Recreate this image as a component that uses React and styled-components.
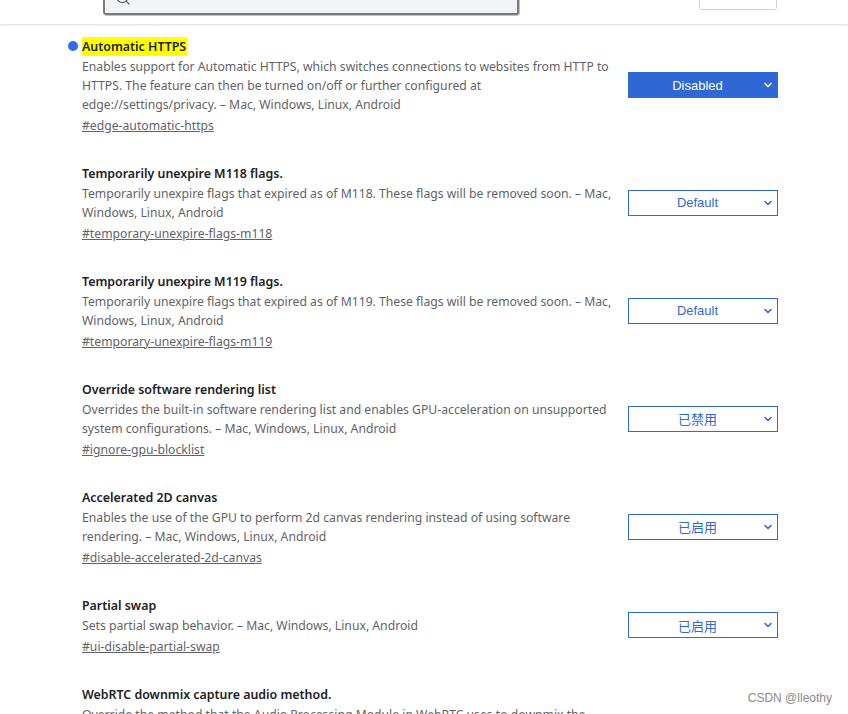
import React from 'react';
import styled, { createGlobalStyle } from 'styled-components';
import { ChevronDown, Search } from 'lucide-react';

const GlobalStyle = createGlobalStyle`
  html, body {
    margin: 0;
    padding: 0;
    background: #ffffff;
    height: 714px;
    overflow: hidden;
  }
  body {
    font-family: "Noto Sans", "Noto Sans CJK SC", sans-serif;
  }
`;

const Page = styled.div`
  position: relative;
  height: 714px;
  overflow: hidden;
`;

const Header = styled.header`
  height: 24px;
  display: flex;
  align-items: flex-end;
  border-bottom: 1px solid #e6e6e6;
  box-shadow: 0 1px 2px rgba(0, 0, 0, 0.06);
  overflow: hidden;
  padding: 0 71px 0 103px;
`;

const SearchBox = styled.div`
  width: 416px;
  height: 40px;
  box-sizing: border-box;
  margin-bottom: 9px;
  background: #f1f3f4;
  border: 2px solid #7b7b7b;
  border-radius: 3px;
  box-shadow: 1px 1px 0 #a9c4f5;
  display: flex;
  align-items: flex-end;
  padding: 0 0 7px 10px;
  color: #5f6368;
`;

const ResetButton = styled.div`
  margin-left: auto;
  width: 78px;
  height: 36px;
  box-sizing: border-box;
  margin-bottom: 14px;
  border: 1px solid #d2d2d2;
  border-radius: 3px;
  background: #fff;
`;

const List = styled.main`
  padding: 10px 0 0 82px;
`;

const Item = styled.section`
  display: flex;
  align-items: center;
  margin-bottom: 27px;
`;

const Info = styled.div`
  width: 532px;
`;

const Title = styled.div`
  display: flex;
  align-items: center;
  height: 22px;
  font-size: 12.4px;
  font-weight: 600;
  color: #202124;
`;

const Dot = styled.span`
  width: 10px;
  height: 10px;
  border-radius: 50%;
  background: #2f6fe4;
  margin-left: -14px;
  margin-right: 4px;
`;

const TitleText = styled.span`
  background: ${p => (p.$hit ? '#ffff00' : 'transparent')};
  line-height: 19px;
  padding-right: 1px;
`;

const Desc = styled.div`
  font-size: 12.2px;
  line-height: 19px;
  color: #5f6368;
`;

const Anchor = styled.a`
  display: block;
  margin-top: 2px;
  font-size: 12.2px;
  line-height: 19px;
  color: #5f6368;
  text-decoration: underline;
`;

const Select = styled.div`
  margin-left: 14px;
  width: 150px;
  height: 26px;
  box-sizing: border-box;
  border: 1px solid #3069d6;
  background: ${p => (p.$active ? '#2f67d4' : '#ffffff')};
  color: ${p => (p.$active ? '#ffffff' : '#3069d6')};
  display: flex;
  align-items: center;
  font-family: "Liberation Sans", "Noto Sans CJK SC", sans-serif;
  font-size: 13px;
`;

const SelectLabel = styled.span`
  flex: 1;
  text-align: center;
  padding-left: 4px;
`;

const Chevron = styled.span`
  display: flex;
  width: 12px;
  margin-right: 3px;
`;

const Watermark = styled.div`
  position: absolute;
  right: 16px;
  bottom: 9px;
  font-family: "Liberation Sans", sans-serif;
  font-size: 12px;
  color: #8a8a8a;
`;

const flags = [
  {
    title: 'Automatic HTTPS',
    hit: true,
    desc: 'Enables support for Automatic HTTPS, which switches connections to websites from HTTP to HTTPS. The feature can then be turned on/off or further configured at edge://settings/privacy. – Mac, Windows, Linux, Android',
    link: '#edge-automatic-https',
    value: 'Disabled',
    active: true,
  },
  {
    title: 'Temporarily unexpire M118 flags.',
    desc: 'Temporarily unexpire flags that expired as of M118. These flags will be removed soon. – Mac, Windows, Linux, Android',
    link: '#temporary-unexpire-flags-m118',
    value: 'Default',
  },
  {
    title: 'Temporarily unexpire M119 flags.',
    desc: 'Temporarily unexpire flags that expired as of M119. These flags will be removed soon. – Mac, Windows, Linux, Android',
    link: '#temporary-unexpire-flags-m119',
    value: 'Default',
  },
  {
    title: 'Override software rendering list',
    desc: 'Overrides the built-in software rendering list and enables GPU-acceleration on unsupported system configurations. – Mac, Windows, Linux, Android',
    link: '#ignore-gpu-blocklist',
    value: '已禁用',
  },
  {
    title: 'Accelerated 2D canvas',
    desc: 'Enables the use of the GPU to perform 2d canvas rendering instead of using software rendering. – Mac, Windows, Linux, Android',
    link: '#disable-accelerated-2d-canvas',
    value: '已启用',
  },
  {
    title: 'Partial swap',
    desc: 'Sets partial swap behavior. – Mac, Windows, Linux, Android',
    link: '#ui-disable-partial-swap',
    value: '已启用',
  },
];

function FlagSelect({ value, active }) {
  return (
    <Select $active={active}>
      <SelectLabel>{value}</SelectLabel>
      <Chevron>
        <ChevronDown size={12} strokeWidth={3.2} />
      </Chevron>
    </Select>
  );
}

export default function App() {
  return (
    <Page>
      <GlobalStyle />
      <Header>
        <SearchBox>
          <Search size={16} strokeWidth={2} />
        </SearchBox>
        <ResetButton />
      </Header>
      <List>
        {flags.map((f) => (
          <Item key={f.link}>
            <Info>
              <Title>
                {f.hit && <Dot />}
                <TitleText $hit={f.hit}>{f.title}</TitleText>
              </Title>
              <Desc>{f.desc}</Desc>
              <Anchor href={f.link}>{f.link}</Anchor>
            </Info>
            <FlagSelect value={f.value} active={f.active} />
          </Item>
        ))}
        <Item>
          <Info>
            <Title>
              <TitleText>WebRTC downmix capture audio method.</TitleText>
            </Title>
            <Desc>
              Override the method that the Audio Processing Module in WebRTC uses to downmix the
              captured audio. – Mac, Windows, Linux, Android
            </Desc>
          </Info>
        </Item>
      </List>
      <Watermark>CSDN @lleothy</Watermark>
    </Page>
  );
}
